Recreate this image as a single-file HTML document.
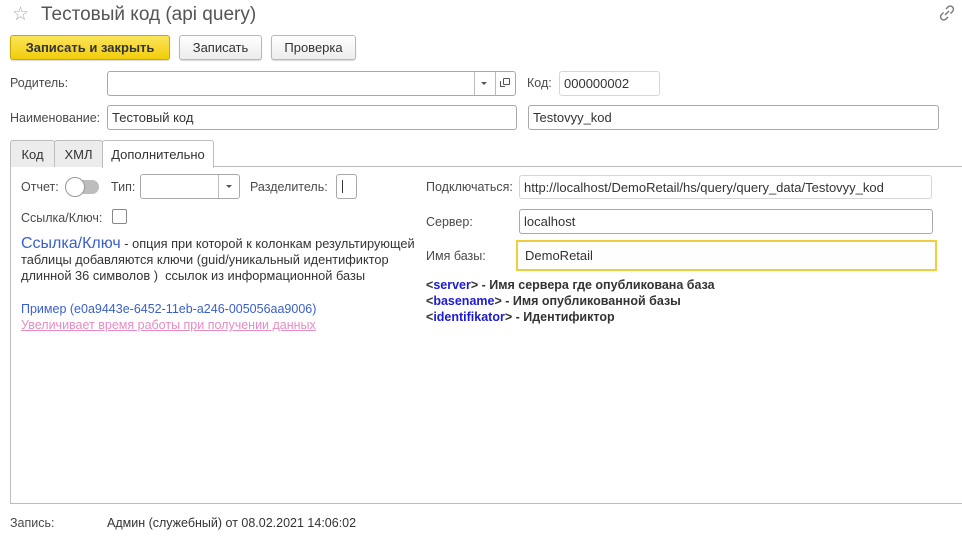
<!DOCTYPE html>
<html><head><meta charset="utf-8"><style>
*{box-sizing:border-box;margin:0;padding:0}
body{width:962px;height:538px;background:#fff;font-family:"Liberation Sans",Arial,sans-serif;font-size:12.5px;color:#4a4a4a;position:relative;overflow:hidden}
.a{position:absolute;white-space:nowrap}
.in{position:absolute;border:1px solid #a9a9a9;border-radius:3px;background:#fff;padding-left:4px;color:#333;display:flex;align-items:center;font-size:13px}
.lt{border-color:#d6d6d6}
.btn{position:absolute;height:25px;border:1px solid #b8b8b8;border-radius:3px;background:linear-gradient(#fff,#ececec);display:flex;align-items:center;justify-content:center;color:#333;font-size:13px;box-shadow:0 1px 1px rgba(0,0,0,.15)}
.tab{position:absolute;top:140px;height:27px;border:1px solid #bdbdbd;border-bottom:none;background:#ececec;display:flex;align-items:center;justify-content:center;color:#333;border-radius:3px 3px 0 0;font-size:13px}
.blue{color:#1b1bd6}
</style></head><body>
<div class="a" style="left:12px;top:3px;font-size:19px;color:#aaa">☆</div>
<div class="a" style="left:41px;top:4px;font-size:19px;color:#555">Тестовый код (api query)</div>
<svg class="a" style="left:938px;top:4px" width="18" height="18" viewBox="0 0 18 18" fill="none" stroke="#777" stroke-width="1.4"><path d="M8 5l2-2a3 3 0 0 1 4.5 4.5l-2 2M10 13l-2 2a3 3 0 0 1-4.5-4.5l2-2M7 11l4-4"/></svg>

<div class="btn" style="left:10px;top:35px;width:160px;background:linear-gradient(#fbe55a,#f2cd0a);border-color:#c9a800;font-weight:bold;color:#333">Записать и закрыть</div>
<div class="btn" style="left:179px;top:35px;width:83px">Записать</div>
<div class="btn" style="left:271px;top:35px;width:85px">Проверка</div>

<div class="a" style="left:10px;top:76px">Родитель:</div>
<div class="in" style="left:107px;top:71px;width:409px;height:25px"></div>
<div class="a" style="left:474px;top:72px;width:1px;height:23px;background:#bbb"></div>
<div class="a" style="left:495px;top:72px;width:1px;height:23px;background:#bbb"></div>
<div class="a" style="left:481px;top:82px;width:0;height:0;border-left:3px solid transparent;border-right:3px solid transparent;border-top:3px solid #555"></div>
<div class="a" style="left:503px;top:78px;width:7px;height:7px;border:1px solid #555;border-radius:1px"></div>
<div class="a" style="left:500px;top:81px;width:5px;height:6px;border-left:1px solid #555;border-bottom:1px solid #555"></div>
<div class="a" style="left:527px;top:76px">Код:</div>
<div class="in lt" style="left:559px;top:71px;width:101px;height:25px">000000002</div>

<div class="a" style="left:10px;top:111px">Наименование:</div>
<div class="in" style="left:107px;top:105px;width:410px;height:25px">Тестовый код</div>
<div class="in" style="left:528px;top:105px;width:411px;height:25px">Testovyy_kod</div>

<div class="a" style="left:10px;top:166px;width:952px;height:1px;background:#bdbdbd"></div>
<div class="a" style="left:10px;top:166px;width:1px;height:338px;background:#bdbdbd"></div>
<div class="a" style="left:10px;top:503px;width:952px;height:1px;background:#bdbdbd"></div>
<div class="tab" style="left:10px;width:45px">Код</div>
<div class="tab" style="left:54px;width:49px">ХМЛ</div>
<div class="tab" style="left:102px;width:112px;height:28px;background:#fff;z-index:2">Дополнительно</div>

<div class="a" style="left:21px;top:180px">Отчет:</div>
<div class="a" style="left:65px;top:180px;width:34px;height:14px;border-radius:7px;background:#bdbdbd"></div>
<div class="a" style="left:65px;top:177px;width:20px;height:20px;border-radius:50%;background:#fff;border:1px solid #999"></div>
<div class="a" style="left:111px;top:180px">Тип:</div>
<div class="in" style="left:140px;top:174px;width:100px;height:25px"></div>
<div class="a" style="left:218px;top:175px;width:1px;height:23px;background:#bbb"></div>
<div class="a" style="left:226px;top:185px;width:0;height:0;border-left:3px solid transparent;border-right:3px solid transparent;border-top:3px solid #555"></div>
<div class="a" style="left:250px;top:180px">Разделитель:</div>
<div class="in" style="left:336px;top:174px;width:21px;height:25px"><span style="width:1px;height:13px;background:#333;display:block;margin-left:1px"></span></div>

<div class="a" style="left:21px;top:211px">Ссылка/Ключ:</div>
<div class="a" style="left:112px;top:209px;width:15px;height:15px;border:1px solid #888;border-radius:2px"></div>

<div class="a" style="left:21px;top:236px;line-height:16px;font-size:12.8px;color:#333"><span style="color:#3a5fcd;font-size:16px">Ссылка/Ключ</span> - опция при которой к колонкам результирующей<br>таблицы добавляются ключи (guid/уникальный идентификтор<br>длинной 36 символов )&nbsp; ссылок из информационной базы</div>
<div class="a" style="left:21px;top:302px;color:#3a5fcd">Пример (e0a9443e-6452-11eb-a246-005056aa9006)</div>
<div class="a" style="left:21px;top:318px;color:#e58cc4;text-decoration:underline">Увеличивает время работы при получении данных</div>

<div class="a" style="left:426px;top:180px">Подключаться:</div>
<div class="in lt" style="left:519px;top:175px;width:413px;height:24px">http://localhost/DemoRetail/hs/query/query_data/Testovyy_kod</div>
<div class="a" style="left:426px;top:215px">Сервер:</div>
<div class="in" style="left:519px;top:209px;width:414px;height:25px">localhost</div>
<div class="a" style="left:426px;top:249px">Имя базы:</div>
<div class="in" style="left:516px;top:240px;width:421px;height:31px;border:2px solid #f0cd3c;border-radius:0;padding-left:7px">DemoRetail</div>
<div class="a" style="left:426px;top:277px;font-weight:bold;color:#333;line-height:16px">&lt;<span class="blue">server</span>&gt; - Имя сервера где опубликована база<br>&lt;<span class="blue">basename</span>&gt; - Имя опубликованной базы<br>&lt;<span class="blue">identifikator</span>&gt; - Идентификтор</div>

<div class="a" style="left:10px;top:516px">Запись:</div>
<div class="a" style="left:107px;top:516px;color:#333">Админ (служебный) от 08.02.2021 14:06:02</div>
</body></html>
